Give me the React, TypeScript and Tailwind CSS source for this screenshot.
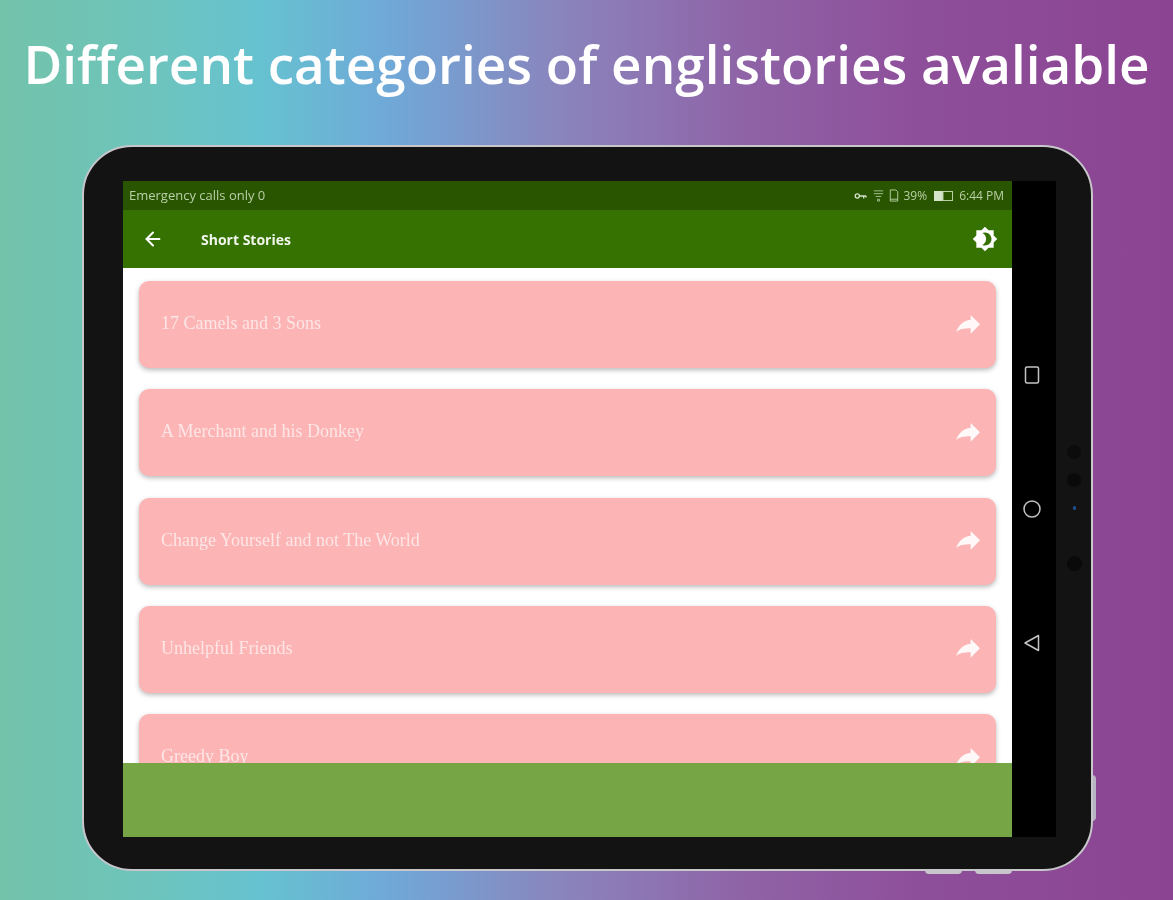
import React from "react";
import { ArrowLeft } from "lucide-react";

const stories = [
  "17 Camels and 3 Sons",
  "A Merchant and his Donkey",
  "Change Yourself and not The World",
  "Unhelpful Friends",
  "Greedy Boy",
];

function ForwardIcon() {
  return (
    <svg viewBox="0 0 24 24" className="h-[32px] w-[32px] fill-white/90">
      <path d="M14 8V4.5l7 7-7 7v-4c-5 0-8.500.5-11 3 1.500-4.500 5-9 11-9.500z" />
    </svg>
  );
}

function BrightnessIcon() {
  return (
    <svg viewBox="0 0 24 24" className="h-[26px] w-[26px] fill-white">
      <path d="M20 8.69V4h-4.69L12 .69 8.69 4H4v4.69L.69 12 4 15.31V20h4.69L12 23.31 15.31 20H20v-4.69L23.31 12 20 8.69zM12 18c-.89 0-1.74-.2-2.5-.55C11.56 16.5 13 14.42 13 12s-1.44-4.5-3.5-5.45C10.26 6.2 11.11 6 12 6c3.31 0 6 2.69 6 6s-2.69 6-6 6z" />
    </svg>
  );
}

function StatusIcons() {
  return (
    <div className="flex items-center gap-[4px] text-[12px] text-[#b9cfa8]">
      <svg viewBox="0 0 16 10" className="h-[8px] w-[15px] fill-none stroke-[#d5e3ca] stroke-[1.6]">
        <circle cx="4" cy="5" r="2.6" />
        <path d="M7 5h8M12 5v3M15 5v2" />
      </svg>
      <svg viewBox="0 0 12 14" className="h-[13px] w-[13px] fill-none stroke-[#a9c495]">
        <path d="M1 2h10M1 5h10M3 8h6M5 11h2v2H5z" />
      </svg>
      <svg viewBox="0 0 10 14" className="h-[13px] w-[10px] fill-none stroke-[#b9cfa8]">
        <path d="M1 1h6l2 2v10H1zM1 11h8" />
      </svg>
      <span>39%</span>
      <svg viewBox="0 0 20 10" className="ml-[3px] h-[10px] w-[20px]">
        <rect x="0" y="0" width="9" height="10" fill="#d5e3ca" />
        <rect x="9" y="0.5" width="9.5" height="9" fill="none" stroke="#b9cfa8" />
      </svg>
      <span className="ml-[1px]">6:44 PM</span>
    </div>
  );
}

function NavBar() {
  return (
    <div className="flex w-[44px] shrink-0 flex-col items-center justify-center gap-[116px] bg-black pr-[4px]">
      <svg viewBox="0 0 18 18" className="h-[18px] w-[18px] fill-none stroke-[#c4c4c4] stroke-[1.5]">
        <rect x="2.5" y="1" width="13" height="16" rx="1.5" />
      </svg>
      <svg viewBox="0 0 18 18" className="h-[18px] w-[18px] fill-none stroke-[#c4c4c4] stroke-[1.5]">
        <circle cx="9" cy="9" r="8" />
      </svg>
      <svg viewBox="0 0 18 18" className="h-[18px] w-[18px] fill-none stroke-[#c4c4c4] stroke-[1.5]">
        <path d="M2 9 15.5 1.5v15z" strokeLinejoin="round" />
      </svg>
    </div>
  );
}

function Sensors() {
  return (
    <div className="flex w-[36px] shrink-0 flex-col items-center pt-[264px]">
      <div className="h-[14px] w-[14px] rounded-full bg-[#0c0c0c]" />
      <div className="mt-[14px] h-[14px] w-[14px] rounded-full bg-[#0a0a0a]" />
      <div className="mt-[19px] h-[4px] w-[3px] rounded-full bg-[#1d4f94]" />
      <div className="mt-[46px] h-[15px] w-[15px] rounded-full bg-[#0a0a0a]" />
    </div>
  );
}

export default function App() {
  return (
    <div className="h-[900px] w-full overflow-hidden bg-[linear-gradient(to_right,#73c3aa_0%,#6ec4bb_12%,#66c2d0_22%,#6fa9d8_33%,#8a84bc_48%,#8f62a6_64%,#8e4f9a_78%,#8b4492_100%)] font-['Open_Sans',sans-serif]">
      <h1 className="flex h-[145px] justify-center pt-[29px] text-[53px] leading-[70px] font-semibold whitespace-nowrap text-white blur-[0.7px]">
        Different categories of englistories avaliable
      </h1>

      <div className="relative ml-[82px] w-[1011px] blur-[0.7px]">
        <div className="absolute right-[-3px] bottom-[50px] h-[46px] w-[4px] rounded-r bg-[#b9b4c4]" />
        <div className="absolute bottom-[-3px] left-[843px] h-[4px] w-[37px] rounded-b bg-[#c9c5cc]" />
        <div className="absolute bottom-[-3px] left-[893px] h-[4px] w-[37px] rounded-b bg-[#c9c5cc]" />

        <div className="relative flex h-[726px] rounded-[50px] border-2 border-[#c6c6cb] bg-[#131313] pt-[34px] pb-[32px] pl-[39px]">
          <div className="flex w-[889px] shrink-0 flex-col">
            <div className="flex h-[29px] shrink-0 items-center justify-between bg-[#2a5500] pr-[8px] pl-[6px]">
              <span className="text-[13px] text-[#b9cfa8]">Emergency calls only 0</span>
              <StatusIcons />
            </div>

            <div className="flex h-[58px] shrink-0 items-center bg-[#367202] pr-[14px] pl-[19px]">
              <ArrowLeft className="h-[22px] w-[22px] text-white" strokeWidth={2.2} />
              <span className="ml-[37px] text-[14px] font-bold text-[#f1f6ec]">Short Stories</span>
              <div className="ml-auto">
                <BrightnessIcon />
              </div>
            </div>

            <div className="flex min-h-0 flex-1 flex-col gap-[21.25px] overflow-hidden bg-white px-[16px] pt-[13px]">
              {stories.map((title) => (
                <div
                  key={title}
                  className="flex h-[87px] shrink-0 items-center justify-between rounded-[10px] bg-[#fdb4b5] pr-[12px] pl-[22px] shadow-[0_2px_5px_rgba(0,0,0,0.28)]"
                >
                  <span className="-translate-y-[1px] font-['Liberation_Serif',serif] text-[18px] text-[#fde6e6]">
                    {title}
                  </span>
                  <ForwardIcon />
                </div>
              ))}
            </div>

            <div className="h-[74px] shrink-0 bg-[#76a546]" />
          </div>

          <NavBar />
          <Sensors />
        </div>
      </div>
    </div>
  );
}
